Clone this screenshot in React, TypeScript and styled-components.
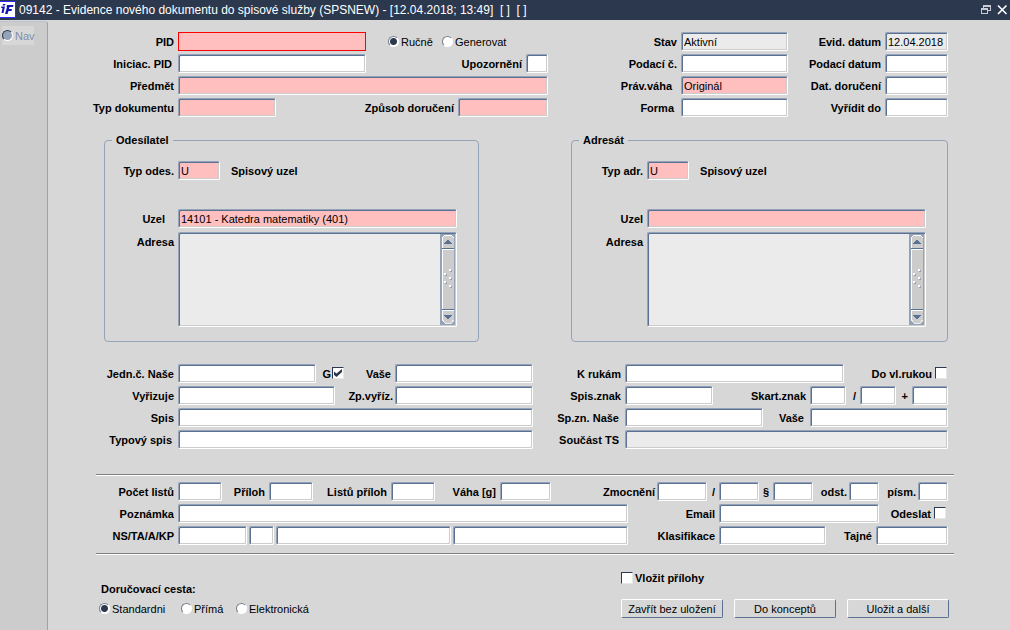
import React, { useId } from "react";
import styled, { createGlobalStyle } from "styled-components";

const c = {
  bar: "#2b384e",
  bg: "#d7d7d7",
  nav: "#cccccc",
  edge: "#94a3b8",
  deep: "#5a7194",
  pink: "#ffbfbf",
  locked: "#ebebeb",
};

type Tone = "plain" | "required" | "locked";
const toneColor: Record<Tone, string> = { plain: "#fff", required: c.pink, locked: c.locked };

const GlobalStyle = createGlobalStyle`
  *, *::before, *::after { box-sizing: border-box; }
  body { margin: 0; background: ${c.bg}; color: #000; font: 11px/14px "Liberation Sans", Arial, sans-serif; }
  input, textarea, button { font: inherit; color: inherit; margin: 0; }
`;

const Page = styled.div`
  min-height: 100vh;
  display: flex;
  flex-direction: column;
`;

const TitleBar = styled.header`
  display: flex;
  align-items: center;
  height: 20px;
  padding-right: 2px;
  background: ${c.bar};
  color: #fff;
`;

const Title = styled.h1`
  flex: 1;
  min-width: 0;
  margin: 0 0 0 3px;
  font-size: 12px;
  line-height: 18px;
  font-weight: 400;
  white-space: pre;
  overflow: hidden;
`;

const WindowButton = styled.button`
  display: flex;
  padding: 0;
  margin-left: 4px;
  border: 0;
  background: none;
`;

const Body = styled.div`
  flex: 1;
  display: flex;
`;

const Sidebar = styled.nav`
  flex: 0 0 48px;
  margin-top: 1px;
  padding: 4px 2px;
  background: ${c.nav};
  border-top: 1px solid #bcc3cd;
  border-right: 1px solid ${c.edge};
  border-top-right-radius: 3px;
`;

const NavChoice = styled.label`
  display: flex;
  align-items: center;
  gap: 2px;
  width: 32px;
  height: 19px;
  background: ${c.bg};
  color: #7f8fa8;
`;

const Form = styled.form`
  flex: 1;
  min-width: 0;
  padding: 12px 62px 12px 36px;
`;

const Columns = styled.div<{ $top?: number }>`
  display: flex;
  margin-top: ${(p) => p.$top ?? 0}px;
`;

const Column = styled.div<{ $share: number; $gap?: number }>`
  flex: ${(p) => p.$share} 1 0;
  min-width: 0;
  display: flex;
  flex-direction: column;
  gap: ${(p) => p.$gap ?? 3}px;
`;

const Row = styled.div`
  display: flex;
  align-items: center;
  height: 19px;
`;

const Caption = styled.label<{ $w: number; $pad: number; $grow?: boolean }>`
  flex: ${(p) => (p.$grow ? 1 : 0)} 0 ${(p) => p.$w}px;
  padding-right: ${(p) => p.$pad}px;
  font-weight: 700;
  text-align: right;
  white-space: nowrap;
`;

const Input = styled.input<{ $w: number; $tone: Tone; $grow?: boolean; $active?: boolean }>`
  flex: ${(p) => (p.$grow ? 1 : 0)} 0 ${(p) => p.$w}px;
  width: ${(p) => p.$w}px;
  min-width: 0;
  height: 19px;
  padding: 1px 2px 0;
  outline: 0;
  border: 1px solid;
  border-color: ${(p) => (p.$active ? "#f00" : `${c.edge} #fff #fff ${c.edge}`)};
  border-radius: ${(p) => (p.$active ? 0 : 2)}px;
  box-shadow: ${(p) => (p.$active ? "none" : `inset 1px 1px 0 ${c.deep}, inset -1px -1px 0 #ccc`)};
  background: ${(p) => toneColor[p.$tone]};
`;

const Spacer = styled.span<{ $w: number }>`
  flex: 0 0 ${(p) => p.$w}px;
`;

const Tick = styled.span`
  position: relative;
  flex: none;
  display: block;
  width: 12px;
  height: 13px;

  input {
    appearance: none;
    display: block;
    width: 12px;
    height: 12px;
    background: #fff;
    border: 1px solid;
    border-color: ${c.bar} #e6e6e6 #e6e6e6 ${c.bar};
  }
  svg {
    position: absolute;
    inset: 0;
    display: none;
    pointer-events: none;
  }
  input:checked + svg {
    display: block;
  }
`;

const Radio = styled.input.attrs({ type: "radio" })`
  appearance: none;
  flex: none;
  width: 11px;
  height: 11px;
  border: 1px solid;
  border-color: #777f8c #fff #fff #777f8c;
  border-radius: 50%;
  background: #fff;

  &:checked {
    background: radial-gradient(circle, ${c.bar} 3px, #fff 4px);
  }
  &:disabled {
    border-color: ${c.bar} #fff #fff ${c.bar};
    background: ${c.edge};
  }
`;

const Choice = styled.label<{ $w: number }>`
  flex: 0 0 ${(p) => p.$w}px;
  display: flex;
  align-items: center;
  gap: 2px;
  white-space: nowrap;
`;

const StrongChoice = styled.label`
  display: flex;
  align-items: center;
  gap: 2px;
  height: 14px;
  font-weight: 700;
`;

const InlineTick = styled.label`
  flex: 0 0 28px;
  display: flex;
  align-items: center;
  justify-content: flex-end;
  gap: 1px;
  font-weight: 700;
`;

const Group = styled.fieldset<{ $share: number }>`
  flex: ${(p) => p.$share} 1 0;
  min-width: 0;
  margin: 0;
  padding: 14px 21px 14px 0;
  border: 1px solid ${c.edge};
  border-radius: 4px;
`;

const Legend = styled.legend`
  margin-left: 7px;
  padding: 0 4px;
  font-weight: 700;
`;

const Remark = styled.span`
  margin-left: 11px;
  font-weight: 700;
`;

const AddressRow = styled.div`
  display: flex;
  align-items: flex-start;
  margin-top: 4px;
`;

const NodeRow = styled(Row)`
  margin-top: 29px;
`;

const AddressCaption = styled(Caption)`
  padding-top: 3px;
`;

const AddressBox = styled.div`
  flex: 1;
  min-width: 0;
  display: flex;
  height: 95px;
  padding: 1px;
  border: 1px solid;
  border-color: ${c.edge} #fff #fff ${c.edge};
  border-radius: 2px;
  box-shadow: inset 1px 1px 0 ${c.deep}, inset -1px -1px 0 #ccc;
  background: ${c.locked};
`;

const AddressText = styled.textarea`
  flex: 1;
  min-width: 0;
  padding: 1px 2px;
  border: 0;
  outline: 0;
  resize: none;
  overflow: hidden;
  background: transparent;
`;

const Rule = styled.hr<{ $top: number }>`
  height: 2px;
  margin: ${(p) => p.$top}px -6px 6px 12px;
  border: 0;
  border-top: 1px solid #808080;
  border-bottom: 1px solid #fff;
`;

const Rows = styled.div`
  display: flex;
  flex-direction: column;
  gap: 3px;
`;

const Footer = styled.div`
  display: flex;
  align-items: flex-end;
  justify-content: space-between;
  margin-right: -1px;
  padding: 10px 0 0 15px;
`;

const Delivery = styled.div`
  display: flex;
  flex-direction: column;
  gap: 3px;
`;

const DeliveryTitle = styled.div`
  font-weight: 700;
  padding-left: 2px;
`;

const Actions = styled.div`
  display: flex;
  flex-direction: column;
  gap: 14px;
`;

const ButtonRow = styled.div`
  display: flex;
  gap: 11px;
`;

const Button = styled.button`
  width: 102px;
  height: 19px;
  padding: 0;
  border: 1px solid;
  border-color: #fff ${c.deep} ${c.deep} #fff;
  border-radius: 2px;
  background: ${c.bg};
  white-space: nowrap;
`;

type FieldProps = {
  label: string;
  lw: number;
  w: number;
  pad?: number;
  tone?: Tone;
  grow?: boolean;
  labelGrow?: boolean;
  active?: boolean;
  value?: string;
};

function Field({ label, lw, w, pad = 4, tone = "plain", grow, labelGrow, active, value }: FieldProps) {
  const id = useId();
  return (
    <>
      <Caption htmlFor={id} $w={lw} $pad={pad} $grow={labelGrow}>{label}</Caption>
      <Input id={id} $w={w} $tone={tone} $grow={grow} $active={active} defaultValue={value} readOnly={tone === "locked"} />
    </>
  );
}

function Check({ id, on }: { id?: string; on?: boolean }) {
  return (
    <Tick>
      <input id={id} type="checkbox" defaultChecked={on} />
      <svg width="12" height="12" viewBox="0 0 12 12" aria-hidden="true">
        <path d="M2 4.500 L4.500 6.500 L10 2 V5 L4.500 10 L2 8 Z" fill={c.bar} />
      </svg>
    </Tick>
  );
}

function CheckField({ label, lw, pad, end }: { label: string; lw: number; pad: number; end: number }) {
  const id = useId();
  return (
    <>
      <Caption htmlFor={id} $w={lw} $pad={pad}>{label}</Caption>
      <Check id={id} />
      <Spacer $w={end} />
    </>
  );
}

function ScrollTrack() {
  const dots = [[9, 35], [4, 39], [9, 43], [4, 47], [9, 51]];
  return (
    <svg width="15" height="91" viewBox="0 0 15 91" shapeRendering="crispEdges" aria-hidden="true">
      <rect width="15" height="91" fill={c.edge} />
      <path d="M2 15V4L5 1H11L14 4V15Z" fill="#ccc" />
      <path d="M2 76V87L5 90H11L14 87V76Z" fill="#ccc" />
      <rect x="2" y="15" width="12" height="61" fill="#ccc" />
      <path d="M2 14V4L5 1H11L14 4" fill="none" stroke="#fff" />
      <path d="M2 14.500h12M2 75.500h12" stroke={c.deep} />
      <path d="M2 15.500h12M2 76.500h12M2.500 16v59M2.500 77v9" stroke="#fff" />
      <path d="M2.500 86L5.500 89.500H10.500L13.500 86" fill="none" stroke="#eee" />
      <path d="M7 6h2v1h1v1h1v1h1v1H4V9h1V8h1V7h1Z" fill={c.deep} />
      <path d="M4 81h8v1h-1v1h-1v1H9v1H7v-1H6v-1H5v-1H4Z" fill={c.deep} />
      {dots.map(([x, y]) => (
        <g key={y}>
          <rect x={x + 1} y={y + 1} width="2" height="2" fill={c.edge} />
          <rect x={x} y={y} width="2" height="2" fill="#fff" />
        </g>
      ))}
    </svg>
  );
}

function Party({ title, type, lw, node, share }: { title: string; type: string; lw: number; node?: string; share: number }) {
  const id = useId();
  return (
    <Group $share={share}>
      <Legend>{title}</Legend>
      <Row>
        <Field label={type} lw={lw} w={42} tone="required" value="U" />
        <Remark>Spisový uzel</Remark>
      </Row>
      <NodeRow>
        <Field label="Uzel" lw={lw} w={100} grow tone="required" value={node} pad={node ? 13 : 4} />
      </NodeRow>
      <AddressRow>
        <AddressCaption htmlFor={id} $w={lw} $pad={4}>Adresa</AddressCaption>
        <AddressBox>
          <AddressText id={id} readOnly />
          <ScrollTrack />
        </AddressBox>
      </AddressRow>
    </Group>
  );
}

export default function App() {
  return (
    <Page>
      <GlobalStyle />
      <TitleBar>
        <svg width="16" height="18" viewBox="0 0 16 18" aria-hidden="true">
          <rect width="16" height="17" fill="#2a2aff" />
          <rect y="1" width="15" height="15" fill="#fff" />
          <path d="M3 3H5.500L5 4.500H2.500ZM1.500 5.500H5L3.500 12H1.500L2.500 7H1Z" fill="#1414b4" />
          <path d="M7 4H13.500L13 6H9.500L9 8H12L11.500 10H8.500L7.500 13H5L7 6H6.500Z" fill="#1414b4" />
        </svg>
        <Title>{"09142 - Evidence nového dokumentu do spisové služby (SPSNEW) - [12.04.2018; 13:49]  [ ]  [ ]"}</Title>
        <WindowButton type="button" aria-label="Obnovit">
          <svg width="12" height="12" viewBox="0 0 12 12" fill="none" stroke="#c9ccd2" shapeRendering="crispEdges">
            <path d="M3.500 4V1.500H10.500V6.500H8M3 2.500H11M1.500 4.500H7.500V9.500H1.500ZM1 5.500H8" />
          </svg>
        </WindowButton>
        <WindowButton type="button" aria-label="Zavřít">
          <svg width="12" height="12" viewBox="0 0 12 12" fill="none" stroke="#fff" strokeWidth="1.6">
            <path d="M2 1.500L10.500 10M10.500 1.500L2 10" />
          </svg>
        </WindowButton>
      </TitleBar>
      <Body>
        <Sidebar>
          <NavChoice>
            <Radio name="nav" disabled />
            Nav
          </NavChoice>
        </Sidebar>
        <Form onSubmit={(e: React.FormEvent) => e.preventDefault()}>
          <Columns>
            <Column $share={464}>
              <Row>
                <Field label="PID" lw={94} w={188} tone="required" active />
                <Spacer $w={22} />
                <Choice $w={54}><Radio name="pid" defaultChecked />Ručně</Choice>
                <Choice $w={70}><Radio name="pid" />Generovat</Choice>
              </Row>
              <Row>
                <Field label="Iniciac. PID" lw={94} w={188} pad={6} />
                <Field label="Upozornění" lw={160} w={22} labelGrow />
              </Row>
              <Row><Field label="Předmět" lw={94} w={188} grow tone="required" /></Row>
              <Row>
                <Field label="Typ dokumentu" lw={94} w={98} tone="required" />
                <Field label="Způsob doručení" lw={182} w={90} labelGrow tone="required" />
              </Row>
            </Column>
            <Column $share={400}>
              <Row>
                <Field label="Stav" lw={133} w={107} grow tone="locked" value="Aktivní" />
                <Field label="Evid. datum" lw={97} w={63} tone="locked" value="12.04.2018" />
              </Row>
              <Row>
                <Field label="Podací č." lw={133} w={107} grow />
                <Field label="Podací datum" lw={97} w={63} />
              </Row>
              <Row>
                <Field label="Práv.váha" lw={133} w={107} grow tone="required" value="Originál" pad={9} />
                <Field label="Dat. doručení" lw={97} w={63} />
              </Row>
              <Row>
                <Field label="Forma" lw={133} w={107} grow pad={7} />
                <Field label="Vyřídit do" lw={97} w={63} />
              </Row>
            </Column>
          </Columns>

          <Columns $top={16}>
            <Spacer $w={20} />
            <Party title="Odesílatel" type="Typ odes." lw={73} share={375} node="14101 - Katedra matematiky (401)" />
            <Spacer $w={92} />
            <Party title="Adresát" type="Typ adr." lw={75} share={377} />
          </Columns>

          <Columns $top={22}>
            <Column $share={449}>
              <Row>
                <Field label="Jedn.č. Naše" lw={94} w={138} grow />
                <InlineTick>G<Check on /></InlineTick>
                <Field label="Vaše" lw={51} w={138} />
              </Row>
              <Row>
                <Field label="Vyřizuje" lw={94} w={157} grow />
                <Field label="Zp.vyříz." lw={60} w={138} pad={2} />
              </Row>
              <Row><Field label="Spis" lw={94} w={157} grow /></Row>
              <Row><Field label="Typový spis" lw={94} w={157} grow pad={6} /></Row>
            </Column>
            <Column $share={415}>
              <Row>
                <Field label="K rukám" lw={92} w={219} grow />
                <CheckField label="Do vl.rukou" lw={91} pad={3} end={1} />
              </Row>
              <Row>
                <Field label="Spis.znak" lw={92} w={88} />
                <Field label="Skart.znak" lw={97} w={36} labelGrow />
                <Field label="/" lw={14} w={36} />
                <Field label="+" lw={16} w={36} />
              </Row>
              <Row>
                <Field label="Sp.zn. Naše" lw={92} w={138} grow pad={6} />
                <Field label="Vaše" lw={47} w={138} pad={6} />
              </Row>
              <Row><Field label="Součást TS" lw={92} w={138} grow tone="locked" pad={6} /></Row>
            </Column>
          </Columns>

          <Rule $top={25} />
          <Rows>
            <Row>
              <Field label="Počet listů" lw={94} w={44} />
              <Field label="Příloh" lw={47} w={44} />
              <Field label="Listů příloh" lw={78} w={44} />
              <Field label="Váha [g]" lw={65} w={51} />
              <Field label="Zmocnění" lw={106} w={50} pad={2} labelGrow />
              <Field label="/" lw={12} w={40} />
              <Field label="§" lw={14} w={40} />
              <Field label="odst." lw={36} w={30} pad={2} />
              <Field label="písm." lw={39} w={30} pad={2} />
            </Row>
            <Row>
              <Field label="Poznámka" lw={94} w={450} grow />
              <Field label="Email" lw={91} w={160} />
              <CheckField label="Odeslat" lw={55} pad={3} end={2} />
            </Row>
            <Row>
              <Field label="NS/TA/A/KP" lw={94} w={69} />
              <Spacer $w={2} />
              <Input aria-label="TA" $w={25} $tone="plain" />
              <Spacer $w={2} />
              <Input aria-label="A" $w={175} $tone="plain" $grow />
              <Spacer $w={2} />
              <Input aria-label="KP" $w={175} $tone="plain" $grow />
              <Field label="Klasifikace" lw={91} w={107} />
              <Field label="Tajné" lw={50} w={72} />
            </Row>
          </Rows>
          <Rule $top={8} />

          <Footer>
            <Delivery role="radiogroup" aria-label="Doručovací cesta">
              <DeliveryTitle>Doručovací cesta:</DeliveryTitle>
              <Row>
                <Choice $w={82}><Radio name="route" defaultChecked />Standardni</Choice>
                <Choice $w={55}><Radio name="route" />Přímá</Choice>
                <Choice $w={80}><Radio name="route" />Elektronická</Choice>
              </Row>
            </Delivery>
            <Actions>
              <StrongChoice><Check />Vložit přílohy</StrongChoice>
              <ButtonRow>
                <Button type="button">Zavřít bez uložení</Button>
                <Button type="button">Do konceptů</Button>
                <Button type="submit">Uložit a další</Button>
              </ButtonRow>
            </Actions>
          </Footer>
        </Form>
      </Body>
    </Page>
  );
}
